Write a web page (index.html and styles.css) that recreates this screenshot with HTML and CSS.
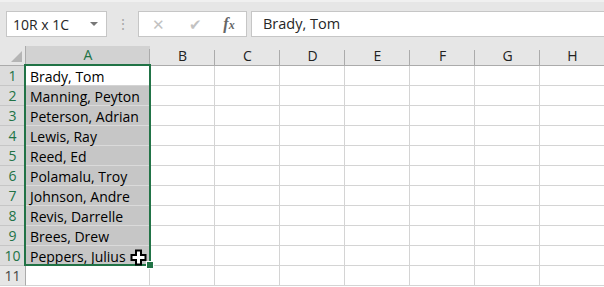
FILE: index.html
```html
<!DOCTYPE html>
<html lang="en">
<head>
    <meta charset="UTF-8">
    <title>Excel - Sorting names</title>
    <link rel="stylesheet" href="styles.css">
</head>
<body>
    <div class="toolbar">
        <div class="name-box">
            <span>10R x 1C</span>
            <span class="drop"></span>
        </div>
        <div class="grip">&#8942;</div>
        <div class="fx-buttons">
            <span class="btn cancel">&#x2715;</span>
            <span class="btn enter">&#x2714;</span>
            <span class="btn fx"><i>f</i><i>x</i></span>
        </div>
        <div class="formula">Brady, Tom</div>
    </div>

    <div class="sheet">
        <div class="grid">
            <div class="corner"><span class="tri"></span></div>
            <div class="col-head active">A</div>
            <div class="col-head">B</div>
            <div class="col-head">C</div>
            <div class="col-head">D</div>
            <div class="col-head">E</div>
            <div class="col-head">F</div>
            <div class="col-head">G</div>
            <div class="col-head">H</div>
        </div>
        <div id="rows"></div>

        <div class="selection"><span class="handle"></span></div>
        <svg class="cursor" width="18" height="18" viewBox="0 0 18 18">
            <path d="M6 1.5h5v4.5h4.5v5H11v4.5H6V11H1.5V6H6z" fill="#fff" stroke="#000" stroke-width="2"/>
        </svg>
    </div>

    <script>
        const names = [
            'Brady, Tom', 'Manning, Peyton', 'Peterson, Adrian', 'Lewis, Ray',
            'Reed, Ed', 'Polamalu, Troy', 'Johnson, Andre', 'Revis, Darrelle',
            'Brees, Drew', 'Peppers, Julius', ''
        ];
        const rows = document.getElementById('rows');
        names.forEach(function (name, i) {
            const row = document.createElement('div');
            row.className = 'grid';
            let cls = 'cell';
            if (i > 0 && i < 10) cls += ' picked';
            let html = '<div class="row-head' + (i < 10 ? ' active' : '') + '">' + (i + 1) + '</div>';
            html += '<div class="' + cls + '">' + name + '</div>';
            for (let c = 0; c < 7; c++) {
                html += '<div class="cell"></div>';
            }
            row.innerHTML = html;
            rows.appendChild(row);
        });
    </script>
</body>
</html>
```

FILE: styles.css
```css
body {
    margin: 0;
    background-color: #fff;
    font-family: "Open Sans", "Noto Sans", sans-serif;
    overflow: hidden;
}
.toolbar {
    background-color: #e6e6e6;
    height: 46px;
    box-sizing: border-box;
    padding: 9px 0 0 6px;
    display: flex;
    border-top: 2px solid #f0f0f0;
}
.name-box {
    width: 101px;
    height: 26px;
    box-sizing: border-box;
    background-color: #fff;
    border: 1px solid #c6c6c6;
    display: flex;
    align-items: center;
    justify-content: space-between;
    padding: 0 8px 0 6px;
    font-size: 14px;
    color: #262626;
}
.drop {
    width: 0;
    height: 0;
    border-left: 4px solid transparent;
    border-right: 4px solid transparent;
    border-top: 4px solid #777;
}
.grip {
    width: 31px;
    text-align: center;
    color: #a8a8a8;
    font-size: 14px;
    line-height: 26px;
}
.fx-buttons {
    width: 109px;
    height: 26px;
    box-sizing: border-box;
    background-color: #fff;
    border: 1px solid #c6c6c6;
    display: flex;
    align-items: center;
}
.btn {
    width: 36px;
    text-align: center;
    color: #c2c2c2;
    font-size: 15px;
}
.btn.cancel {
    padding-left: 2px;
}
.btn.enter {
    padding-left: 3px;
}
.btn.fx {
    color: #666;
    font-family: "Liberation Serif", serif;
    font-size: 16px;
    font-weight: bold;
}
.btn.fx i:last-child {
    font-size: 12px;
}
.formula {
    flex: 1;
    margin-left: 4px;
    height: 26px;
    box-sizing: border-box;
    background-color: #fff;
    border: 1px solid #c6c6c6;
    border-right: none;
    padding-left: 11px;
    font-size: 14.5px;
    line-height: 24px;
    color: #262626;
}
.sheet {
    position: relative;
}
.grid {
    display: grid;
    grid-template-columns: 26px 124px repeat(7, 65px);
}
.corner,
.col-head {
    height: 20px;
    box-sizing: border-box;
    background-color: #e6e6e6;
    border-bottom: 1px solid #ababab;
}
.corner {
    position: relative;
    border-right: 1px solid #ababab;
}
.tri {
    position: absolute;
    right: 3px;
    bottom: 3px;
    width: 0;
    height: 0;
    border-left: 11px solid transparent;
    border-bottom: 11px solid #b5b5b5;
}
.col-head {
    text-align: center;
    font-size: 14px;
    line-height: 19px;
    color: #222;
    background-image: linear-gradient(#ababab, #ababab);
    background-size: 1px 15px;
    background-position: right bottom;
    background-repeat: no-repeat;
}
.col-head.active {
    background-color: #d2d2d2;
    color: #217346;
    border-bottom: 2px solid #217346;
    line-height: 18px;
}
.row-head {
    height: 20px;
    box-sizing: border-box;
    background-color: #e6e6e6;
    border-right: 1px solid #ababab;
    border-bottom: 1px solid #d4d4d4;
    text-align: center;
    font-size: 14px;
    line-height: 19px;
    color: #444;
}
.row-head.active {
    background-color: #dcdcdc;
    color: #217346;
    border-bottom-color: #c6c6c6;
}
.cell {
    height: 20px;
    box-sizing: border-box;
    border-right: 1px solid #d4d4d4;
    border-bottom: 1px solid #d4d4d4;
    padding-left: 4px;
    font-size: 14px;
    line-height: 21px;
    color: #000;
    white-space: nowrap;
}
.cell.picked {
    background-color: #c6c6c6;
    border-bottom-color: #dadada;
}
.selection {
    position: absolute;
    left: 24px;
    top: 18px;
    width: 127px;
    height: 202px;
    box-sizing: border-box;
    border: 2px solid #217346;
}
.handle {
    position: absolute;
    right: -5px;
    bottom: -5px;
    width: 6px;
    height: 6px;
    background-color: #217346;
    border: 1px solid #fff;
}
.cursor {
    position: absolute;
    left: 130px;
    top: 203px;
}
```
